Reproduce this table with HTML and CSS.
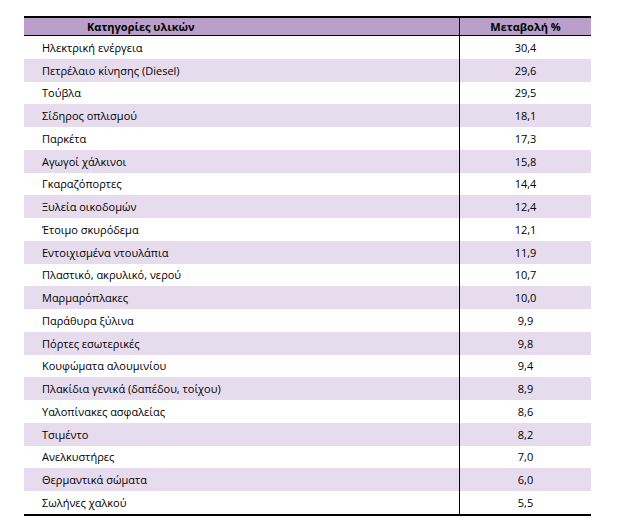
FILE: index.html
```
<!DOCTYPE html>
<html lang="el">
<head>
<meta charset="utf-8">
<link rel="stylesheet" href="styles.css">
</head>
<body>
<div class="table">
  <div class="row head"><div class="c1">Κατηγορίες υλικών</div><div class="c2">Μεταβολή %</div></div>
  <div class="row"><div class="c1">Ηλεκτρική ενέργεια</div><div class="c2">30,4</div></div>
  <div class="row alt"><div class="c1">Πετρέλαιο κίνησης (Diesel)</div><div class="c2">29,6</div></div>
  <div class="row"><div class="c1">Τούβλα</div><div class="c2">29,5</div></div>
  <div class="row alt"><div class="c1">Σίδηρος οπλισμού</div><div class="c2">18,1</div></div>
  <div class="row"><div class="c1">Παρκέτα</div><div class="c2">17,3</div></div>
  <div class="row alt"><div class="c1">Αγωγοί χάλκινοι</div><div class="c2">15,8</div></div>
  <div class="row"><div class="c1">Γκαραζόπορτες</div><div class="c2">14,4</div></div>
  <div class="row alt"><div class="c1">Ξυλεία οικοδομών</div><div class="c2">12,4</div></div>
  <div class="row"><div class="c1">Έτοιμο σκυρόδεμα</div><div class="c2">12,1</div></div>
  <div class="row alt"><div class="c1">Εντοιχισμένα ντουλάπια</div><div class="c2">11,9</div></div>
  <div class="row"><div class="c1">Πλαστικό, ακρυλικό, νερού</div><div class="c2">10,7</div></div>
  <div class="row alt"><div class="c1">Μαρμαρόπλακες</div><div class="c2">10,0</div></div>
  <div class="row"><div class="c1">Παράθυρα ξύλινα</div><div class="c2">9,9</div></div>
  <div class="row alt"><div class="c1">Πόρτες εσωτερικές</div><div class="c2">9,8</div></div>
  <div class="row"><div class="c1">Κουφώματα αλουμινίου</div><div class="c2">9,4</div></div>
  <div class="row alt"><div class="c1">Πλακίδια γενικά (δαπέδου, τοίχου)</div><div class="c2">8,9</div></div>
  <div class="row"><div class="c1">Υαλοπίνακες ασφαλείας</div><div class="c2">8,6</div></div>
  <div class="row alt"><div class="c1">Τσιμέντο</div><div class="c2">8,2</div></div>
  <div class="row"><div class="c1">Ανελκυστήρες</div><div class="c2">7,0</div></div>
  <div class="row alt"><div class="c1">Θερμαντικά σώματα</div><div class="c2">6,0</div></div>
  <div class="row"><div class="c1">Σωλήνες χαλκού</div><div class="c2">5,5</div></div>
</div>
</body>
</html>
```
FILE: styles.css
```
html, body {
  margin: 0;
  padding: 0;
  background: #ffffff;
}
body {
  padding: 16px 0 0 24px;
  font-family: "Open Sans", "Noto Sans", sans-serif;
  font-size: 11px;
  color: #000;
}
.table {
  width: 567px;
  border-top: 2px solid #000;
  border-bottom: 2px solid #000;
}
.row {
  display: grid;
  grid-template-columns: 435px 132px;
  height: 22.75px;
  align-items: center;
}
.row > div {
  height: 100%;
  display: flex;
  align-items: center;
}
.c1 {
  padding-left: 18px;
}
.c2 {
  border-left: 1px solid #000;
  justify-content: center;
}
.alt {
  background: #e7dced;
}
.head {
  height: 17px;
  background: #b99fca;
  border-bottom: 1px solid #000;
  font-weight: bold;
}
.head .c1 {
  padding-left: 63px;
}
```
